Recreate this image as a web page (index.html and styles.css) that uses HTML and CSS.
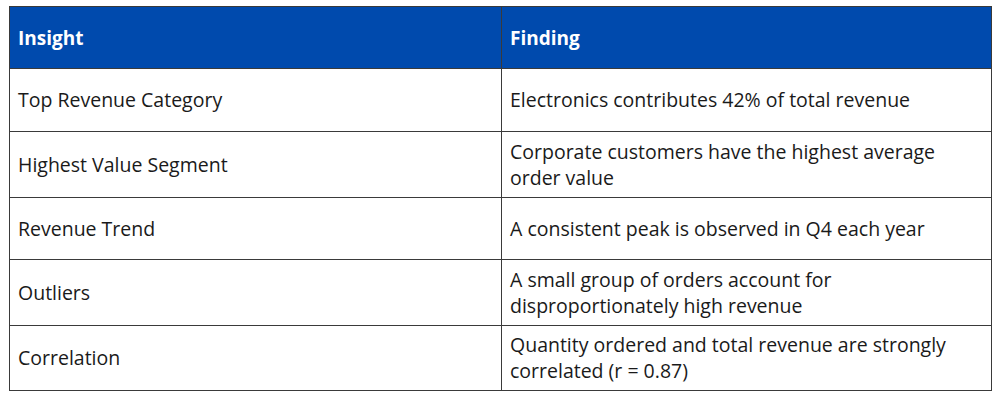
FILE: index.html
```html
<!DOCTYPE html>
<html>
<head>
<meta charset="utf-8">
<link rel="stylesheet" href="styles.css">
</head>
<body>
<table class="insights">
  <thead>
    <tr><th class="col-a">Insight</th><th>Finding</th></tr>
  </thead>
  <tbody>
    <tr class="r1"><td>Top Revenue Category</td><td>Electronics contributes 42% of total revenue</td></tr>
    <tr class="r2"><td>Highest Value Segment</td><td>Corporate customers have the highest average order value</td></tr>
    <tr class="r3"><td>Revenue Trend</td><td>A consistent peak is observed in Q4 each year</td></tr>
    <tr class="r4"><td>Outliers</td><td>A small group of orders account for disproportionately high revenue</td></tr>
    <tr class="r5"><td>Correlation</td><td>Quantity ordered and total revenue are strongly correlated (r = 0.87)</td></tr>
  </tbody>
</table>
</body>
</html>
```
FILE: styles.css
```css
html, body {
  margin: 0;
  padding: 0;
  background: #ffffff;
}
body {
  padding: 6px 9px 0 9px;
  font-family: "Open Sans", "Liberation Sans", sans-serif;
  color: #1a1a1a;
}
.insights {
  border-collapse: collapse;
  width: 983px;
  table-layout: fixed;
  border: 1.5px solid #444;
}
.insights th,
.insights td {
  border: 1.5px solid #3a3a3a;
  padding: 0 8px;
  text-align: left;
  vertical-align: middle;
  font-size: 19.5px;
  line-height: 26px;
}
.insights th {
  background: #004aad;
  color: #ffffff;
  font-weight: 700;
  height: 61px;
  font-size: 19px;
}
.insights .col-a {
  width: 475px;
}
.insights td {
  font-weight: 400;
}
.r1 td { height: 62px; }
.r2 td { height: 65px; }
.r3 td { height: 61px; }
.r4 td { height: 65px; }
.r5 td { height: 64px; }
```
